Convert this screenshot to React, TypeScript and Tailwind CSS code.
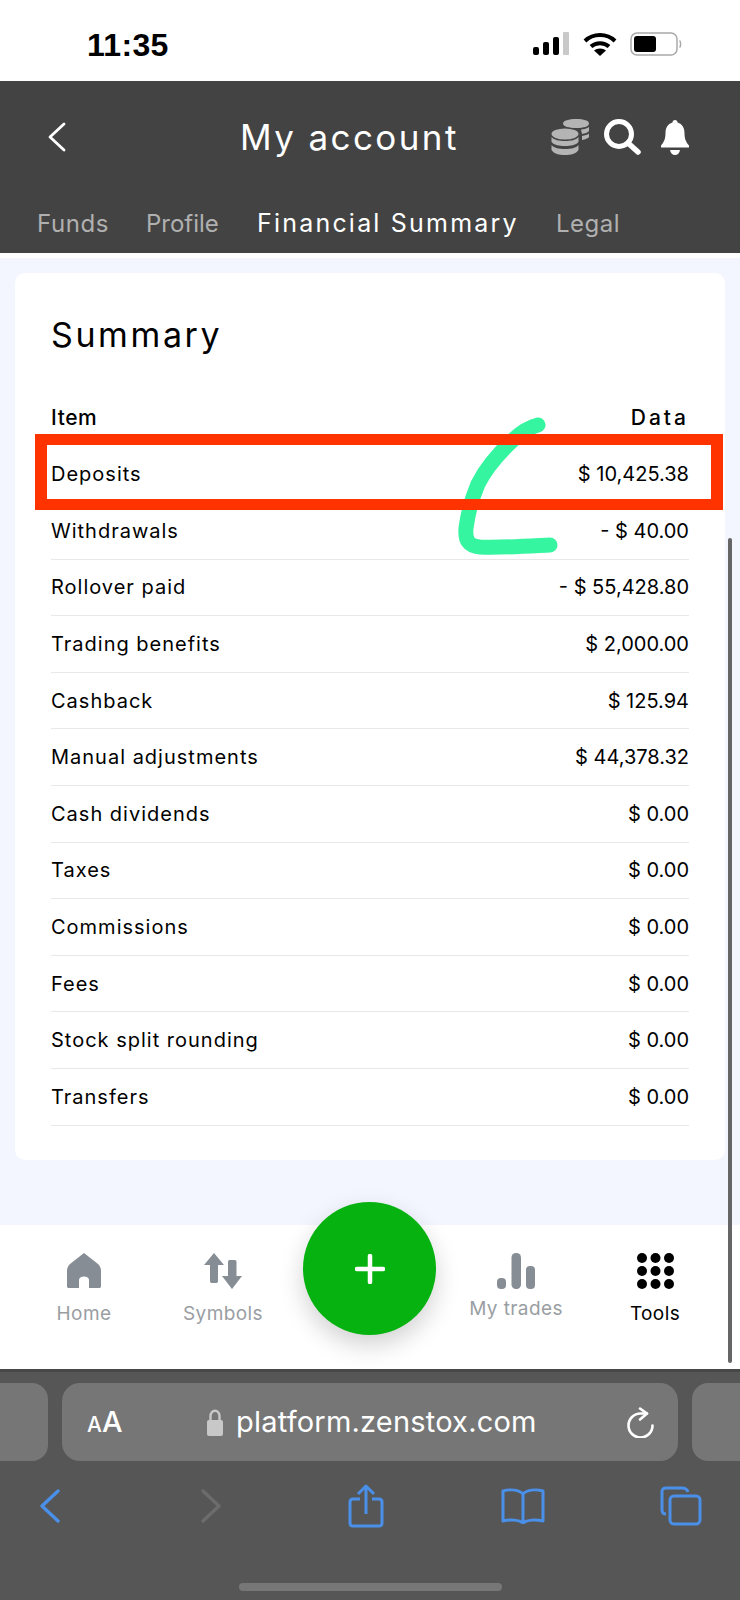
const rows: [string, string][] = [
    ["Deposits", "$ 10,425.38"],
    ["Withdrawals", "- $ 40.00"],
    ["Rollover paid", "- $ 55,428.80"],
    ["Trading benefits", "$ 2,000.00"],
    ["Cashback", "$ 125.94"],
    ["Manual adjustments", "$ 44,378.32"],
    ["Cash dividends", "$ 0.00"],
    ["Taxes", "$ 0.00"],
    ["Commissions", "$ 0.00"],
    ["Fees", "$ 0.00"],
    ["Stock split rounding", "$ 0.00"],
    ["Transfers", "$ 0.00"],
];

function StatusBar() {
    return (
        <div className="flex h-[81px] shrink-0 items-center justify-between bg-white pt-[6px] pr-[58px] pl-[87px]">
            <span className="mt-[3px] font-['Liberation_Sans',sans-serif] text-[32px] font-bold tracking-[0.3px] text-black">11:35</span>
            <div className="flex items-center gap-[13px]">
                <svg width="37" height="23" viewBox="0 0 37 23">
                    <rect x="0" y="15" width="6" height="8" rx="2" fill="#000" />
                    <rect x="10" y="10" width="6" height="13" rx="2" fill="#000" />
                    <rect x="20" y="5" width="6" height="18" rx="2" fill="#000" />
                    <rect x="30" y="0" width="6" height="23" rx="1" fill="#c9c9c9" />
                </svg>
                <svg width="34" height="24" viewBox="0 0 34 24" fill="none" stroke="#000" strokeWidth="4">
                    <path d="M2 9 C10 1 24 1 32 9" />
                    <path d="M8 14.5 C13 10 21 10 26 14.5" />
                    <path d="M17 24 L11 18.5 C14 15.8 20 15.8 23 18.5 Z" fill="#000" stroke="none" />
                </svg>
                <svg width="52" height="24" viewBox="0 0 52 24">
                    <rect x="1" y="1" width="46" height="22" rx="6" fill="none" stroke="#a9a9a9" strokeWidth="1.5" />
                    <rect x="4" y="4" width="22" height="16" rx="3" fill="#000" />
                    <path d="M49.5 8.5 C51 9.5 51 14.5 49.5 15.5" fill="none" stroke="#a9a9a9" strokeWidth="1.5" />
                </svg>
            </div>
        </div>
    );
}

function CoinsIcon() {
    return (
        <svg width="40" height="37" viewBox="0 0 40 37" fill="#b4b4b4">
            <path d="M12 4.5 C12 1.5 18 0 25 0 C33 0 38 1.5 38 4.5 C38 7.5 33 9 25 9 C18 9 12 7.5 12 4.5 Z" />
            <path d="M30 10.5 C33 10.2 36 9.4 38 8 L38 12 C37 13.5 34 14.6 31 15 Z" />
            <path d="M31 17 C34 16.6 36.5 15.8 38 14.5 L38 18 C37 19.4 34.5 20.6 31 21 Z" />
            <ellipse cx="14" cy="15" rx="13.5" ry="5.5" />
            <path d="M0.5 18 C3 21 8 22 14 22 C20 22 25 21 27.5 18 L27.5 23 C25 26 20 27 14 27 C8 27 3 26 0.5 23 Z" />
            <path d="M0.5 26 C3 29 8 30 14 30 C20 30 25 29 27.5 26 L27.5 31 C25 35 20 36 14 36 C8 36 3 35 0.5 31 Z" />
        </svg>
    );
}

function Header() {
    return (
        <div className="flex h-[172px] shrink-0 flex-col bg-[#434343]">
            <div className="flex h-[114px] items-center pt-[2px] pr-[51px] pb-[4px] pl-[48px]">
                <div className="w-[192px]">
                    <svg width="18" height="30" viewBox="0 0 18 30" fill="none" stroke="#fff" strokeWidth="2.8" strokeLinecap="round" strokeLinejoin="round">
                        <path d="M16 2 L2 15 L16 28" />
                    </svg>
                </div>
                <h1 className="font-['Inter',sans-serif] text-[35px] tracking-[2.4px] text-white">My account</h1>
                <div className="ml-auto flex items-center gap-[13px]">
                    <CoinsIcon />
                    <svg width="37" height="36" viewBox="0 0 37 36" fill="none" stroke="#fff">
                        <circle cx="15" cy="15" r="12.5" strokeWidth="5" />
                        <path d="M24 24 L34 33" strokeWidth="5.5" strokeLinecap="round" />
                    </svg>
                    <svg width="28" height="35" viewBox="0 0 28 35" fill="#fff" className="ml-[7px]">
                        <path d="M14 0 C15.5 0 16.5 1 16.5 2.5 C21.5 4 23.5 8 23.5 13 C23.5 19 25 22 28 25.5 L28 27.5 L0 27.5 L0 25.5 C3 22 4.5 19 4.5 13 C4.5 8 6.5 4 11.5 2.5 C11.5 1 12.5 0 14 0 Z" />
                        <path d="M9 30 L19 30 C18.5 33 16.5 35 14 35 C11.5 35 9.5 33 9 30 Z" />
                    </svg>
                </div>
            </div>
            <nav className="flex h-[54px] items-center pt-[4px] pl-[37px] font-['Inter',sans-serif] text-[24px] text-[#b0b0b0]">
                <span className="w-[109px] tracking-[0.6px]">Funds</span>
                <span className="w-[111px]">Profile</span>
                <span className="w-[299px] text-[25px] tracking-[2.2px] text-white">Financial Summary</span>
                <span className="tracking-[0.5px]">Legal</span>
            </nav>
        </div>
    );
}

function SummaryCard() {
    return (
        <div className="mx-[15px] mt-[15px] rounded-[10px] bg-white px-[36px] pt-[39px] pb-[34px] font-['Inter',sans-serif] text-black">
            <h2 className="text-[34px] leading-[46px] tracking-[2.6px]">Summary</h2>
            <div className="mt-[44px] flex h-[32px] items-center justify-between text-[21px] font-medium">
                <span className="tracking-[0.6px]">Item</span>
                <span className="tracking-[3px]">Data</span>
            </div>
            <div className="mt-[12.5px] flex flex-col">
                {rows.map(([label, value]) => (
                    <div key={label} className="flex h-[56.6px] items-center justify-between border-b border-[#e8e8e8] text-[20px]">
                        <span className="tracking-[1px]">{label}</span>
                        <span>{value}</span>
                    </div>
                ))}
            </div>
        </div>
    );
}

function BottomNav() {
    return (
        <div className="relative flex h-[144px] shrink-0 bg-white font-['Inter',sans-serif] text-[19px] tracking-[0.4px] text-[#9a9ea3]">
            <div className="absolute left-[303px] top-[-23px] flex h-[133px] w-[133px] items-center justify-center rounded-full bg-[#06b20f] shadow-[0_10px_24px_rgba(0,0,0,0.18)]">
                <svg width="30" height="30" viewBox="0 0 30 30" stroke="#fff" strokeWidth="4.5" strokeLinecap="round">
                    <path d="M15 2 V28 M2 15 H28" />
                </svg>
            </div>
            <div className="flex w-[168px] flex-col items-center pt-[28px]">
                <svg width="34" height="35" viewBox="0 0 34 35" fill="#878d94">
                    <path d="M17 0 L31 11 C33 13 34 15 34 18 L34 33 C34 34.5 33.5 35 32 35 L22 35 L22 27 C22 25 20 23.5 17 23.5 C14 23.5 12 25 12 27 L12 35 L2 35 C0.5 35 0 34.5 0 33 L0 18 C0 15 1 13 3 11 Z" />
                </svg>
                <span className="mt-[12px]">Home</span>
            </div>
            <div className="flex w-[110px] flex-col items-center pt-[28px]">
                <svg width="38" height="36" viewBox="0 0 38 36" fill="#878d94">
                    <path d="M10 0 L20 12 L14 12 L14 28 C14 29.5 13 30 12 30 L8 30 C7 30 6 29.5 6 28 L6 12 L0 12 Z" />
                    <path d="M28 36 L38 23 L32.5 23 L32.5 9 C32.5 7.5 31.5 7 30.5 7 L26 7 C25 7 24 7.5 24 9 L24 23 L18 23 Z" />
                </svg>
                <span className="mt-[11px]">Symbols</span>
            </div>
            <div className="ml-[179px] flex w-[118px] flex-col items-center pt-[28px]">
                <svg width="38" height="36" viewBox="0 0 38 36" fill="#878d94">
                    <rect x="0" y="25" width="9" height="11" rx="4" />
                    <rect x="14.5" y="0" width="9.5" height="36" rx="4.5" />
                    <rect x="29" y="13" width="9" height="23" rx="4" />
                </svg>
                <span className="mt-[6px]">My trades</span>
            </div>
            <div className="flex w-[160px] flex-col items-center pt-[28px] text-black">
                <svg width="37" height="36" viewBox="0 0 37 36" fill="#000">
                    {[5, 18, 31].map((cy) =>
                        [5, 18.5, 32].map((cx) => <circle key={`${cx}-${cy}`} cx={cx} cy={cy} r="5" />),
                    )}
                </svg>
                <span className="mt-[11px]">Tools</span>
            </div>
        </div>
    );
}

function BrowserChrome() {
    return (
        <div className="flex flex-1 flex-col bg-[#565656]">
            <div className="mt-[11px] flex h-[78px] gap-[14px]">
                <div className="ml-[-20px] w-[68px] rounded-r-[16px] bg-[#767676]" />
                <div className="flex w-[616px] items-center rounded-[18px] bg-[#767676] pr-[24px] pl-[25px] text-white">
                    <span className="w-[120px] font-['Inter',sans-serif] font-medium">
                        <span className="text-[21px]">A</span>
                        <span className="text-[29px]">A</span>
                    </span>
                    <svg width="16" height="27" viewBox="0 0 16 27" fill="none">
                        <path d="M3.5 13 V7.5 C3.5 4 5.5 1.8 8 1.8 C10.5 1.8 12.5 4 12.5 7.5 V13" stroke="#c8c8c8" strokeWidth="2.4" />
                        <rect x="0" y="11" width="16" height="16" rx="2" fill="#c8c8c8" />
                    </svg>
                    <span className="ml-[13px] font-['Inter',sans-serif] text-[29px] tracking-[0.2px]">platform.zenstox.com</span>
                    <svg width="27" height="31" viewBox="0 0 27 31" fill="none" stroke="#fff" strokeWidth="2.6" strokeLinecap="round" strokeLinejoin="round" className="ml-auto">
                        <path d="M20 6.5 H13.5 A12 12 0 1 0 25.5 18.5" />
                        <path d="M13 1.5 L20 6.5 L13 12.5" />
                    </svg>
                </div>
                <div className="flex-1 rounded-l-[16px] bg-[#767676]" />
            </div>
            <div className="mt-[20px] flex h-[50px] items-center pl-[40px] text-[#4a8fe8]">
                <svg width="20" height="34" viewBox="0 0 20 34" fill="none" stroke="currentColor" strokeWidth="3.4" strokeLinecap="round" strokeLinejoin="round">
                    <path d="M18 2 L2 17 L18 32" />
                </svg>
                <svg width="20" height="34" viewBox="0 0 20 34" fill="none" stroke="#6c6c6c" strokeWidth="3.4" strokeLinecap="round" strokeLinejoin="round" className="ml-[141px]">
                    <path d="M2 2 L18 17 L2 32" />
                </svg>
                <svg width="36" height="44" viewBox="0 0 36 44" fill="none" stroke="currentColor" strokeWidth="3" strokeLinejoin="round" className="ml-[127px]">
                    <path d="M12 15 L5 15 C3 15 2 16 2 18 L2 39 C2 41 3 42 5 42 L31 42 C33 42 34 41 34 39 L34 18 C34 16 33 15 31 15 L24 15" />
                    <path d="M18 30 V3 M10 10 L18 2 L26 10" />
                </svg>
                <svg width="44" height="36" viewBox="0 0 44 36" fill="none" stroke="currentColor" strokeWidth="3" strokeLinejoin="round" className="ml-[117px]">
                    <path d="M22 6 C18 2 10 1 2 3 L2 33 C10 31 18 32 22 35 C26 32 34 31 42 33 L42 3 C34 1 26 2 22 6 Z M22 6 V35" />
                </svg>
                <svg width="42" height="40" viewBox="0 0 42 40" fill="none" stroke="currentColor" strokeWidth="3" className="ml-[115px]">
                    <path d="M6 28 C3 28 2 26 2 24 L2 6 C2 3 3 2 6 2 L22 2 C25 2 27 3 28 6" />
                    <rect x="10" y="10" width="30" height="28" rx="4" />
                </svg>
            </div>
            <div className="mx-auto mt-[52px] h-[8px] w-[263px] rounded-full bg-[#777777]" />
        </div>
    );
}

export default function App() {
    return (
        <div className="relative flex h-[1600px] w-[740px] flex-col overflow-hidden bg-[#f3f6fe]">
            <StatusBar />
            <Header />
            <div className="flex-1">
                <div className="h-[5px] bg-white" />
                <SummaryCard />
            </div>
            <BottomNav />
            <div className="h-[3px] shrink-0 bg-[#484848]" />
            <div className="flex h-[228px] shrink-0">
                <BrowserChrome />
            </div>

            {/* scrollbar thumb */}
            <div className="absolute left-[728px] top-[538px] h-[825px] w-[4px] rounded-full bg-[#666666]" />

            {/* marker annotations over the table, the red frame sits above the green stroke */}
            <svg className="absolute left-[440px] top-[410px]" width="140" height="150" viewBox="0 0 140 150" fill="none">
                <path
                    d="M98 15 C90 17 80 23 72 31 C58 44 46 58 38 74 C32 88 28 103 26 118 C25 130 28 136 40 137 C60 138 90 136 110 135"
                    stroke="#35f5a0"
                    strokeWidth="15"
                    strokeLinecap="round"
                    strokeLinejoin="round"
                />
            </svg>
            <div className="absolute left-[35px] top-[434px] h-[76px] w-[688px] border-x-[12px] border-y-[11px] border-[#ff3300]" />
        </div>
    );
}
